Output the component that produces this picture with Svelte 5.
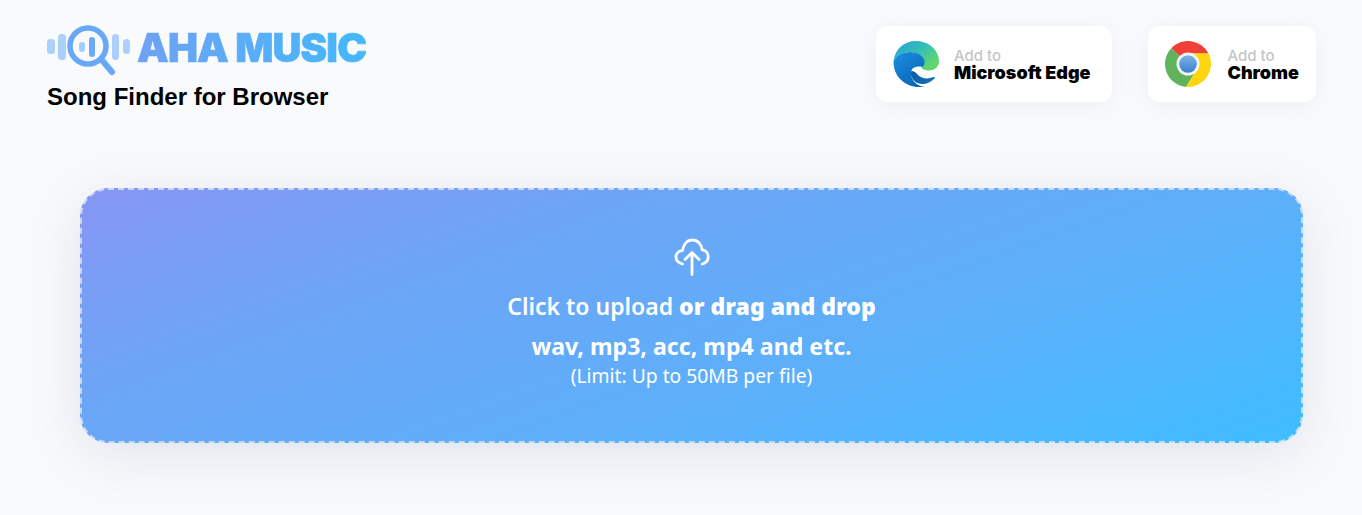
<script>
  const bars = [
    { x: 0, y: 14, h: 15, w: 8 },
    { x: 11, y: 9, h: 26, w: 8 },
    { x: 65, y: 9, h: 26, w: 7 },
    { x: 76, y: 14, h: 15, w: 7 }
  ];
</script>

<div class="page">
  <header class="top">
    <div class="brand">
      <div class="logo">
        <svg class="mark" viewBox="0 0 90 52" width="90" height="52" aria-hidden="true">
          {#each bars as b}
            <rect x={b.x} y={b.y} width={b.w} height={b.h} rx="3.5" fill="#aad0fb" />
          {/each}
          <rect x="32" y="17" width="6" height="10" rx="3" fill="#a5cdfb" />
          <rect x="42" y="12" width="6" height="20" rx="3" fill="#6aaaf8" />
          <circle cx="41" cy="21" r="18" fill="none" stroke="#68a8f7" stroke-width="5.500" />
          <path d="M54 34 L65 47" stroke="#68a8f7" stroke-width="6" stroke-linecap="round" />
        </svg>
        <span class="wordmark">AHA MUSIC</span>
      </div>
      <div class="tagline">Song Finder for Browser</div>
    </div>

    <nav class="stores">
      <a class="store edge" href="#edge">
        <svg viewBox="0 0 46 46" width="46" height="46" aria-hidden="true">
          <defs>
            <linearGradient id="eTop" x1="0.1" y1="0.1" x2="0.9" y2="0.7">
              <stop offset="0" stop-color="#2aa6d6" />
              <stop offset="0.55" stop-color="#35c1b0" />
              <stop offset="1" stop-color="#5fd66e" />
            </linearGradient>
            <linearGradient id="eLow" x1="0" y1="0" x2="0.6" y2="1">
              <stop offset="0" stop-color="#1a8fe0" />
              <stop offset="1" stop-color="#0c67b8" />
            </linearGradient>
            <linearGradient id="eDeep" x1="0" y1="0" x2="1" y2="0.6">
              <stop offset="0" stop-color="#0c59a4" />
              <stop offset="1" stop-color="#1470bd" />
            </linearGradient>
          </defs>
          <path d="M0.6 20C2 8 11 0 23 0c13 0 23 9.500 23 20 0 6-4.500 9.500-10 9.500-4 0-7.500-1.500-7.500-3.500 0-1 1.500-1.500 1.500-4.500 0-6-6-10.500-13-10.500C9 11.500 2.500 15 0.600 20Z" fill="url(#eTop)" />
          <path d="M0.600 20C3 14.500 9.500 11 17 11c8 0 14.500 4.500 14.500 10.500 0 2-1 3.500-2 4.500-4-1-9.500-.5-11 3.500-2.500 7 4 15.500 13.500 16.500-3 .7-6 .5-8.500 0C10 44 0 34 0.600 20Z" fill="url(#eLow)" />
          <path d="M18.300 30c-1.800 6.500 3.700 12.500 10 13 5 .4 9.500-1.600 13.200-5.500 1-1 .3-2-1-1.400-6 2.600-12 1.600-16-2.600-2-2.100-3-3.500-6.200-3.500Z" fill="url(#eDeep)" />
        </svg>
        <span class="label"><span class="add">Add to</span><strong>Microsoft Edge</strong></span>
      </a>
      <a class="store chrome" href="#chrome">
        <svg viewBox="0 0 46 46" width="46" height="46" aria-hidden="true">
          <defs>
            <linearGradient id="cBlue" x1="0" y1="0" x2="0" y2="1">
              <stop offset="0" stop-color="#7fb2e6" />
              <stop offset="1" stop-color="#3a80cf" />
            </linearGradient>
          </defs>
          <path d="M23 23 6.300 7.200A23 23 0 0 1 43.500 12.500H23Z" fill="#ef3f36" />
          <path d="M23 23 6.300 7.200A23 23 0 0 0 21 45.900L31 30Z" fill="#5fb35c" />
          <path d="M23 12.500H43.500A23 23 0 0 1 21 45.900L31 30Z" fill="#fdd60f" />
          <circle cx="23" cy="23" r="11.500" fill="#f4f4f4" />
          <circle cx="23" cy="23" r="8.800" fill="url(#cBlue)" />
        </svg>
        <span class="label"><span class="add">Add to</span><strong>Chrome</strong></span>
      </a>
    </nav>
  </header>

  <section class="drop">
    <svg class="cloud" viewBox="0 0 36 38" width="36" height="38" aria-hidden="true">
      <path d="M8.500 26C4.500 25 2 22.500 2 19c0-3.600 2.700-6.300 6.500-6.500C9.500 6 13.500 2 18.500 2c5 0 9 4 9.700 9.800 3.800.3 6 3.500 6 7.200 0 3.200-2.200 6-6 7" fill="none" stroke="#fff" stroke-width="2.800" stroke-linecap="round" stroke-linejoin="round" />
      <path d="M18 36.500V15M11 21.500 18 14.500l7 7" fill="none" stroke="#fff" stroke-width="2.800" stroke-linecap="round" stroke-linejoin="round" />
    </svg>
    <p class="l1"><span class="soft">Click to upload</span> <b>or drag and drop</b></p>
    <p class="l2">wav, mp3, acc, mp4 and etc.</p>
    <p class="l3">(Limit: Up to 50MB per file)</p>
  </section>
</div>

<style>
  :global(body) {
    margin: 0;
    background: #f9fafc;
  }
  .page {
    height: 515px;
    box-sizing: border-box;
    overflow: hidden;
    background: #f9fafc;
    font-family: "Noto Sans", "Open Sans", sans-serif;
  }
  .top {
    display: flex;
    justify-content: space-between;
    align-items: flex-start;
    padding: 25px 46px 0 47px;
    height: 188px;
    box-sizing: border-box;
  }
  .logo {
    display: flex;
    align-items: flex-start;
    height: 52px;
  }
  .mark {
    display: block;
    flex: none;
  }
  .wordmark {
    font-family: Inter, Roboto, sans-serif;
    font-weight: 900;
    font-size: 40px;
    line-height: 46px;
    letter-spacing: -0.85px;
    white-space: nowrap;
    background: linear-gradient(90deg, #6fa2f4, #42b8fb);
    -webkit-background-clip: text;
    background-clip: text;
    color: transparent;
    -webkit-text-stroke: 0.7px transparent;
  }
  .tagline {
    margin-top: 6px;
    font-family: "Liberation Sans", Arial, sans-serif;
    font-weight: 700;
    font-size: 24px;
    line-height: 28px;
    color: #000;
  }
  .stores {
    display: flex;
    gap: 36px;
    padding-top: 1px;
  }
  .store {
    display: flex;
    align-items: center;
    gap: 15px;
    height: 76px;
    box-sizing: border-box;
    padding: 0 22px 0 17px;
    background: #fff;
    border-radius: 12px;
    box-shadow: 0 4px 24px rgba(120, 135, 170, 0.09);
    text-decoration: none;
  }
  .chrome {
    gap: 16px;
    padding-right: 17px;
  }
  .store svg {
    flex: none;
  }
  .label {
    display: flex;
    flex-direction: column;
  }
  .add {
    font-family: Inter, Roboto, sans-serif;
    font-size: 15px;
    line-height: 16px;
    color: #c5c5c5;
    font-weight: 500;
  }
  .label strong {
    font-family: Inter, Roboto, sans-serif;
    font-size: 18px;
    line-height: 17px;
    font-weight: 900;
    color: #000;
    white-space: nowrap;
  }
  .drop {
    width: 1223px;
    height: 255px;
    box-sizing: border-box;
    margin-left: 80px;
    padding-top: 48px;
    display: flex;
    flex-direction: column;
    align-items: center;
    text-align: center;
    color: #fff;
    border: 2px dashed rgba(228, 234, 246, 0.75);
    border-radius: 28px;
    background: linear-gradient(160deg, #8796f4 0%, #6ca5f6 30%, #5cb0fa 65%, #3fbdff 100%) border-box;
    box-shadow: 0 12px 60px rgba(90, 110, 150, 0.16);
  }
  .cloud {
    display: block;
    margin-bottom: 10px;
  }
  p {
    margin: 0;
    white-space: nowrap;
  }
  .l1 {
    font-size: 23px;
    line-height: 40px;
    font-weight: 700;
  }
  .soft {
    font-weight: 600;
  }
  .l2 {
    font-size: 23.15px;
    line-height: 40px;
    font-weight: 700;
  }
  .l3 {
    font-size: 19.3px;
    line-height: 20px;
    font-weight: 400;
  }
</style>
